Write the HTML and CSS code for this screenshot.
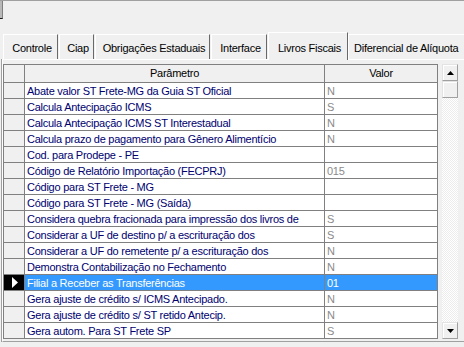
FILE: index.html
```html
<!DOCTYPE html>
<html lang="pt-BR">
<head>
  <meta charset="UTF-8" />
  <title>Parâmetros - Livros Fiscais</title>
  <link rel="stylesheet" href="styles.css">
</head>
<body>

  <!-- resto da barra de cima -->
  <div class="topbar"><div class="stub"></div></div>

  <!-- Abas -->
  <div class="tabs">
    <div class="tab tab-controle">Controle</div>
    <div class="tab tab-ciap">Ciap</div>
    <div class="tab tab-obrig">Obrigações Estaduais</div>
    <div class="tab tab-interface">Interface</div>
    <div class="tab active">Livros Fiscais</div>
    <div class="tab tab-difal">Diferencial de Alíquota</div>
  </div>

  <div class="panel">
    <div class="grid">
      <div class="row head">
        <div class="ind"></div><div class="par">Parâmetro</div><div class="val">Valor</div>
      </div>
      <div class="row"><div class="ind"></div><div class="par">Abate valor ST Frete-MG da Guia ST Oficial</div><div class="val">N</div></div>
      <div class="row"><div class="ind"></div><div class="par">Calcula Antecipação ICMS</div><div class="val">S</div></div>
      <div class="row"><div class="ind"></div><div class="par">Calcula Antecipação ICMS ST Interestadual</div><div class="val">N</div></div>
      <div class="row"><div class="ind"></div><div class="par">Calcula prazo de pagamento para Gênero Alimentício</div><div class="val">N</div></div>
      <div class="row"><div class="ind"></div><div class="par">Cod. para Prodepe - PE</div><div class="val"></div></div>
      <div class="row"><div class="ind"></div><div class="par">Código de Relatório Importação (FECPRJ)</div><div class="val">015</div></div>
      <div class="row"><div class="ind"></div><div class="par">Código para ST Frete - MG</div><div class="val"></div></div>
      <div class="row"><div class="ind"></div><div class="par">Código para ST Frete - MG (Saída)</div><div class="val"></div></div>
      <div class="row"><div class="ind"></div><div class="par">Considera quebra fracionada para impressão dos livros de</div><div class="val">S</div></div>
      <div class="row"><div class="ind"></div><div class="par">Considerar a UF de destino p/ a escrituração dos</div><div class="val">S</div></div>
      <div class="row"><div class="ind"></div><div class="par">Considerar a UF do remetente p/ a escrituração dos</div><div class="val">N</div></div>
      <div class="row"><div class="ind"></div><div class="par">Demonstra Contabilização no Fechamento</div><div class="val">N</div></div>
      <div class="row sel">
        <div class="ind"><svg width="6" height="11" viewBox="0 0 6 11"><polygon points="0,0 6,5.5 0,11" fill="#fff"/></svg></div>
        <div class="par">Filial a Receber as Transferências</div><div class="val">01</div>
      </div>
      <div class="row"><div class="ind"></div><div class="par">Gera ajuste de crédito s/ ICMS Antecipado.</div><div class="val">N</div></div>
      <div class="row"><div class="ind"></div><div class="par">Gera ajuste de crédito s/ ST retido Antecip.</div><div class="val">N</div></div>
      <div class="row"><div class="ind"></div><div class="par">Gera autom. Para ST Frete SP</div><div class="val">S</div></div>
    </div>

    <!-- barra de rolagem -->
    <div class="vscroll">
      <div class="sbtn"><svg width="7" height="4" viewBox="0 0 7 4"><polygon points="3.5,0 7,4 0,4" fill="#000"/></svg></div>
      <div class="thumb"></div>
      <div class="track"></div>
      <div class="sbtn"><svg width="7" height="4" viewBox="0 0 7 4"><polygon points="0,0 7,0 3.5,4" fill="#000"/></svg></div>
    </div>
  </div>

</body>
</html>
```

FILE: styles.css
```css
    body {
      margin: 0;
      width: 464px;
      height: 347px;
      overflow: hidden;
      background: #f0f0f0;
      font-family: "Liberation Sans", Arial, sans-serif;
      font-size: 11px;
      letter-spacing: -0.25px;
      color: #000;
    }

    .topbar {
      height: 32px;
      border-top: 1px solid #a0a0a0;
      box-sizing: border-box;
    }

    .stub {
      width: 2px;
      height: 17px;
      background: #b9b9b9;
      border-right: 1px solid #808080;
      border-bottom: 1px solid #1a1a1a;
    }

    /* Abas */
    .tabs {
      display: flex;
      align-items: flex-end;
      height: 27px;
      padding-left: 3px;
      white-space: nowrap;
    }

    .tab {
      flex-shrink: 0;
      height: 25px;
      line-height: 22px;
      padding: 2px 0 0 3px;
      margin-right: 1px;
      text-align: center;
      border-top: 1px solid #fff;
      border-left: 1px solid #fff;
      border-right: 1px solid #696969;
      box-sizing: border-box;
      background: #f0f0f0;
    }

    .tab-controle { width: 55px; }
    .tab-ciap { width: 35px; }
    .tab-obrig { width: 115px; }
    .tab-interface { width: 56px; }

    .tab.active {
      position: relative;
      z-index: 2;
      width: 80px;
      height: 28px;
      line-height: 26px;
      margin: 0 0 -1px 0;
    }

    .tab.tab-difal {
      padding: 2px 8px 0 5px;
      text-align: left;
    }

    /* Painel da aba */
    .panel {
      display: flex;
      align-items: flex-start;
      margin-left: 2px;
      padding: 4px 0 2px 0;
      border-top: 1px solid #fff;
      border-left: 1px solid #fff;
      border-bottom: 1px solid #a0a0a0;
      box-shadow: -1px 0 0 #a0a0a0;
    }

    .grid {
      display: grid;
      grid-template-columns: 21px 300px 113px;
      grid-template-rows: 18px;
      grid-auto-rows: 16px;
      border-top: 1px solid #808080;
      border-left: 1px solid #808080;
    }

    .row {
      display: contents;
    }

    .row > div {
      box-sizing: border-box;
      border-right: 1px solid #808080;
      border-bottom: 1px solid #808080;
      background: #fff;
      padding: 1px 0 0 2px;
      line-height: 14px;
      white-space: nowrap;
      overflow: hidden;
    }

    .row > .ind {
      background: #f0f0f0;
      padding: 0;
    }

    .par {
      color: #000070;
    }

    .val {
      color: #8a8a8a;
    }

    .row.head > div {
      background: #f0f0f0;
      color: #000;
      text-align: center;
      padding: 0;
      line-height: 17px;
    }

    .row.sel > div {
      background: #3399ff;
      color: #fff;
    }

    .row.sel > .ind {
      background: #000;
      display: flex;
      align-items: center;
      justify-content: center;
      padding-left: 2px;
    }

    /* Barra de rolagem */
    .vscroll {
      display: flex;
      flex-direction: column;
      width: 16px;
      height: 275px;
      margin-left: 4px;
    }

    .sbtn,
    .thumb {
      height: 17px;
      box-sizing: border-box;
      background: #f0f0f0;
      border: 1px solid;
      border-color: #e3e3e3 #a0a0a0 #a0a0a0 #e3e3e3;
      box-shadow: inset 1px 1px 0 #fff;
    }

    .sbtn {
      display: flex;
      align-items: center;
      justify-content: center;
    }

    .track {
      flex: 1;
      background: repeating-conic-gradient(#fff 0 25%, #ececec 0 50%) 0 0 / 2px 2px;
    }
```
